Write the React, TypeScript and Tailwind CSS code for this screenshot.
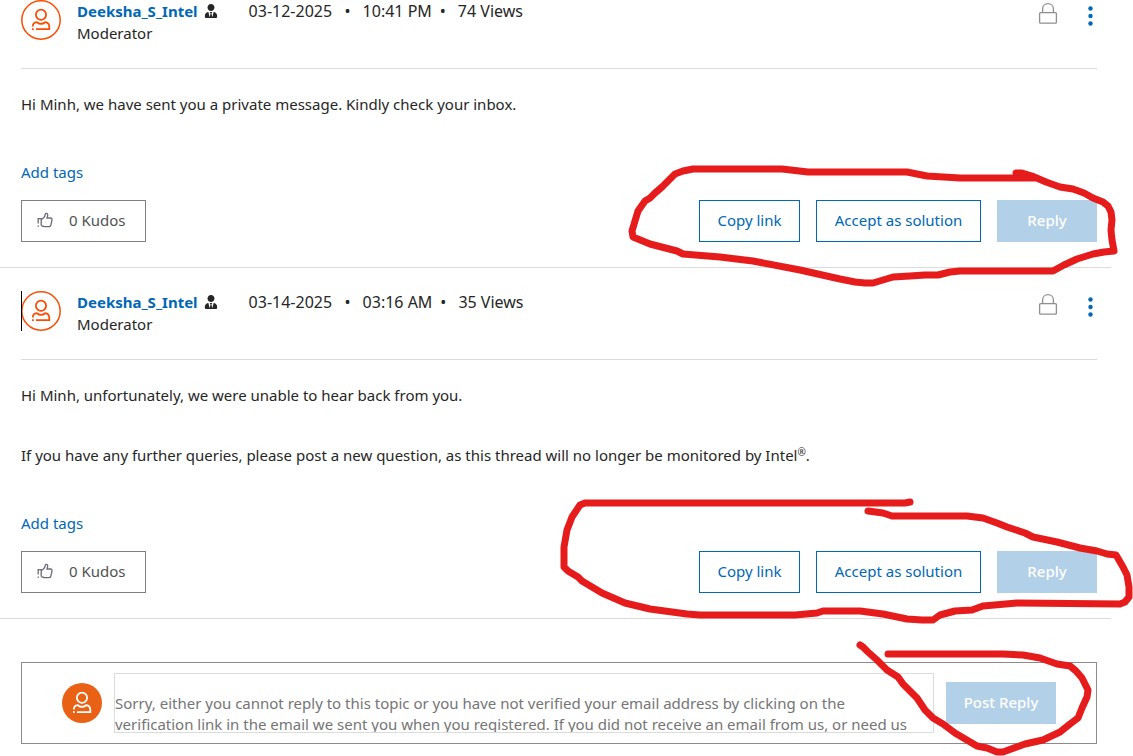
import { FaUserTie } from "react-icons/fa";

type Post = {
  author: string;
  role: string;
  date: string;
  time: string;
  views: string;
  body: string[];
  focused?: boolean;
};

const posts: Post[] = [
  {
    author: "Deeksha_S_Intel",
    role: "Moderator",
    date: "03-12-2025",
    time: "10:41 PM",
    views: "74 Views",
    body: ["Hi Minh, we have sent you a private message. Kindly check your inbox."],
  },
  {
    author: "Deeksha_S_Intel",
    role: "Moderator",
    date: "03-14-2025",
    time: "03:16 AM",
    views: "35 Views",
    body: [
      "Hi Minh, unfortunately, we were unable to hear back from you.",
      "If you have any further queries, please post a new question, as this thread will no longer be monitored by Intel®.",
    ],
    focused: true,
  },
];

const replyNotice =
  "Sorry, either you cannot reply to this topic or you have not verified your email address by clicking on the verification link in the email we sent you when you registered. If you did not receive an email from us, or need us to send it again, please contact support.";

export default function App() {
  return (
    <div className="relative min-h-screen overflow-hidden bg-white pb-3 font-['Noto_Sans',sans-serif] text-[15px] text-[#262626]">
      <main>
        {posts.map((post) => (
          <PostItem key={post.date} post={post} />
        ))}
        <ReplyBox />
      </main>
      <Markup />
    </div>
  );
}

function PostItem({ post }: { post: Post }) {
  return (
    <article className="mr-[22px] border-b border-[#dcdcdc] pt-[23px] pr-[14px] pb-[25px] pl-[21px] first:pt-0">
      <header className="flex h-[69px] items-start border-b border-[#dcdcdc]">
        <a href="#profile" aria-label={post.author} className="relative mr-4 shrink-0">
          <Avatar />
          {post.focused && <span className="absolute inset-y-0 left-0 w-px bg-black" />}
        </a>
        <div className="mr-[31px] leading-[22px]">
          <div className="flex items-center gap-1.5">
            <a href="#profile" className="font-bold text-[#0068b5]">
              {post.author}
            </a>
            <FaUserTie size={14} />
          </div>
          <p>{post.role}</p>
        </div>
        <div className="flex text-base leading-[22px]">
          <span className="w-[88px]">{post.date}</span>
          <Dot />
          <span>{post.time}</span>
          <Dot />
          <span>{post.views}</span>
        </div>
        <div className="ml-auto flex items-start">
          <LockIcon />
          <button type="button" aria-label="Show options" className="ml-[25px] h-[32px] w-[14px] text-[#0068b5]">
            <svg width="14" height="32" viewBox="0 0 14 32" fill="currentColor">
              <circle cx="7.5" cy="8.5" r="2.2" />
              <circle cx="7.5" cy="16" r="2.2" />
              <circle cx="7.5" cy="23.5" r="2.2" />
            </svg>
          </button>
        </div>
      </header>

      <div className="flex flex-col gap-[30px] pt-5 pb-[42px] leading-[30px]">
        {post.body.map((line) => (
          <p key={line}>
            <BodyText text={line} />
          </p>
        ))}
      </div>

      <a href="#tags" className="block w-fit leading-[22px] text-[#0068b5]">
        Add tags
      </a>

      <div className="mt-[17px] flex items-center">
        <button
          type="button"
          className="flex h-[42px] w-[125px] items-center gap-4 border border-[#808080] px-[15px] pb-0.5 text-[#525252]"
        >
          <ThumbIcon />
          0 Kudos
        </button>
        <div className="ml-auto flex gap-4">
          <button type="button" className="h-[42px] w-[101px] border border-[#0068b5] pb-0.5 text-[#0068b5]">
            Copy link
          </button>
          <button type="button" className="h-[42px] w-[165px] border border-[#0068b5] pb-0.5 text-[#0068b5]">
            Accept as solution
          </button>
          <button type="button" disabled className="h-[42px] w-[100px] bg-[#b2d0e8] pb-0.5 font-medium text-white">
            Reply
          </button>
        </div>
      </div>
    </article>
  );
}

// keeps the registered mark small and raised next to the brand name
function BodyText({ text }: { text: string }) {
  const [before, after] = text.split("®");
  if (after === undefined) return <>{text}</>;
  return (
    <>
      {before}
      <sup className="text-[10px]">®</sup>
      {after}
    </>
  );
}

function ReplyBox() {
  return (
    <form className="mt-[43px] mr-9 ml-[21px] flex h-[82px] items-center border border-[#8c8c8c] px-10">
      <Avatar filled />
      <textarea
        aria-label="Reply"
        placeholder={replyNotice}
        className="mx-3 h-[60px] min-w-0 flex-1 resize-none overflow-hidden border border-[#dcdcdc] pt-[19px] pr-2 leading-[21px] placeholder:text-[#757575]"
      />
      <button type="button" disabled className="h-[42px] w-[110px] shrink-0 bg-[#b2d0e8] pb-0.5 font-medium text-white">
        Post Reply
      </button>
    </form>
  );
}

function Dot() {
  return <span className="w-[26px] pr-1 text-center">•</span>;
}

function Avatar({ filled = false }: { filled?: boolean }) {
  return (
    <svg width="40" height="40" viewBox="0 0 40 40" fill="none" className="shrink-0">
      {filled ? (
        <circle cx="20" cy="20" r="20" fill="#e96115" />
      ) : (
        <circle cx="20" cy="20" r="19.2" stroke="#fc4c02" strokeWidth="1.5" />
      )}
      <g stroke={filled ? "#fff" : "#fc4c02"} strokeWidth="1.8">
        <circle cx="20" cy="14.8" r="5.1" />
        <path d="M11.8 26.6C11.8 24.2 13.4 22.4 15.8 22.2C18.3 24.2 21.7 24.2 24.2 22.2C26.8 22.5 28.3 24.6 28.3 27V29.2H15" />
        <path d="M11 29.2H12.8" />
      </g>
    </svg>
  );
}

function LockIcon() {
  return (
    <svg width="20" height="26" viewBox="0 0 20 26" fill="none" stroke="#8f8f8f" strokeWidth="1.3">
      <rect x="1.6" y="12.6" width="16.8" height="10.6" rx="1" />
      <path d="M4.6 12.6V9C4.6 5.8 7 3.7 10 3.7S15.4 5.8 15.4 9V12.6" />
    </svg>
  );
}

function ThumbIcon() {
  return (
    <svg width="16" height="16" viewBox="0 0 16 16" fill="none" stroke="#6a6d75" strokeWidth="1.3">
      <path d="M1.2 11.6V6.6H4.2V13.6" />
      <path d="M4.2 7.6C6.8 6.4 8 4.6 8.3 2.2C8.5 1 10.6 1 10.7 2.8C10.8 4 10.4 5 10 6H13.6C14.7 6 15.2 6.8 15 7.8L13.9 13C13.6 14.2 12.9 14.7 11.8 14.7H7.6C6.2 14.7 5.6 13.8 4.2 13.6" />
      <path d="M0.6 14.2H2" />
    </svg>
  );
}

// freehand pen strokes circling the action buttons
function Markup() {
  return (
    <svg
      width="1133"
      height="756"
      viewBox="0 0 1133 756"
      fill="none"
      stroke="#e61c1c"
      strokeWidth="7"
      strokeLinecap="round"
      strokeLinejoin="round"
      className="pointer-events-none absolute top-0 left-0"
    >
      <path d="M1016 173L1022 173L1032 176L1046 182L1060 187L1073 189L1084 193L1093 198L1103 202L1108 206L1111 212L1112 220L1111 230L1112 240L1114 251L1104 252L1093 254L1077 259L1064 265L1053 271L960 271L950 272L938 275L925 275L910 276L893 277L873 283L865 283L855 282L840 279L800 270L753 261L720 257L683 254L677 251L650 244L633 237L632 231L638 211L645 201L650 198L655 193L662 187L675 174L683 171L693 169L782 169L808 172L907 172L927 176L960 178L1036 178" />
      <path d="M910 502L905 503L585 503L580 505L572 517L567 530L564 547L564 567L568 571L578 577L582 581L602 593L625 603L650 609L687 614L700 615L795 615L817 613L823 611L845 611L860 611L883 614L907 619L922 620L933 620L940 615L955 611L972 610L983 606L1017 603L1120 604L1125 602L1129 597L1129 587L1127 575L1123 567L1116 555L1107 554L1097 551L1080 548L1057 542L1033 537L1025 533L1007 527L997 523L983 518L967 516L892 516L883 513L868 511" />
      <path d="M860 645L863 647L868 652L877 660L887 670L898 677L903 684L917 698L925 710L933 718L943 724L955 733L977 746L987 748L997 752L1003 752L1025 744L1043 740L1060 732L1070 724L1078 718L1082 708L1087 697L1088 690L1082 678L1076 671L1070 666L1057 664L1040 658L1023 655L1003 654L888 654" />
    </svg>
  );
}
